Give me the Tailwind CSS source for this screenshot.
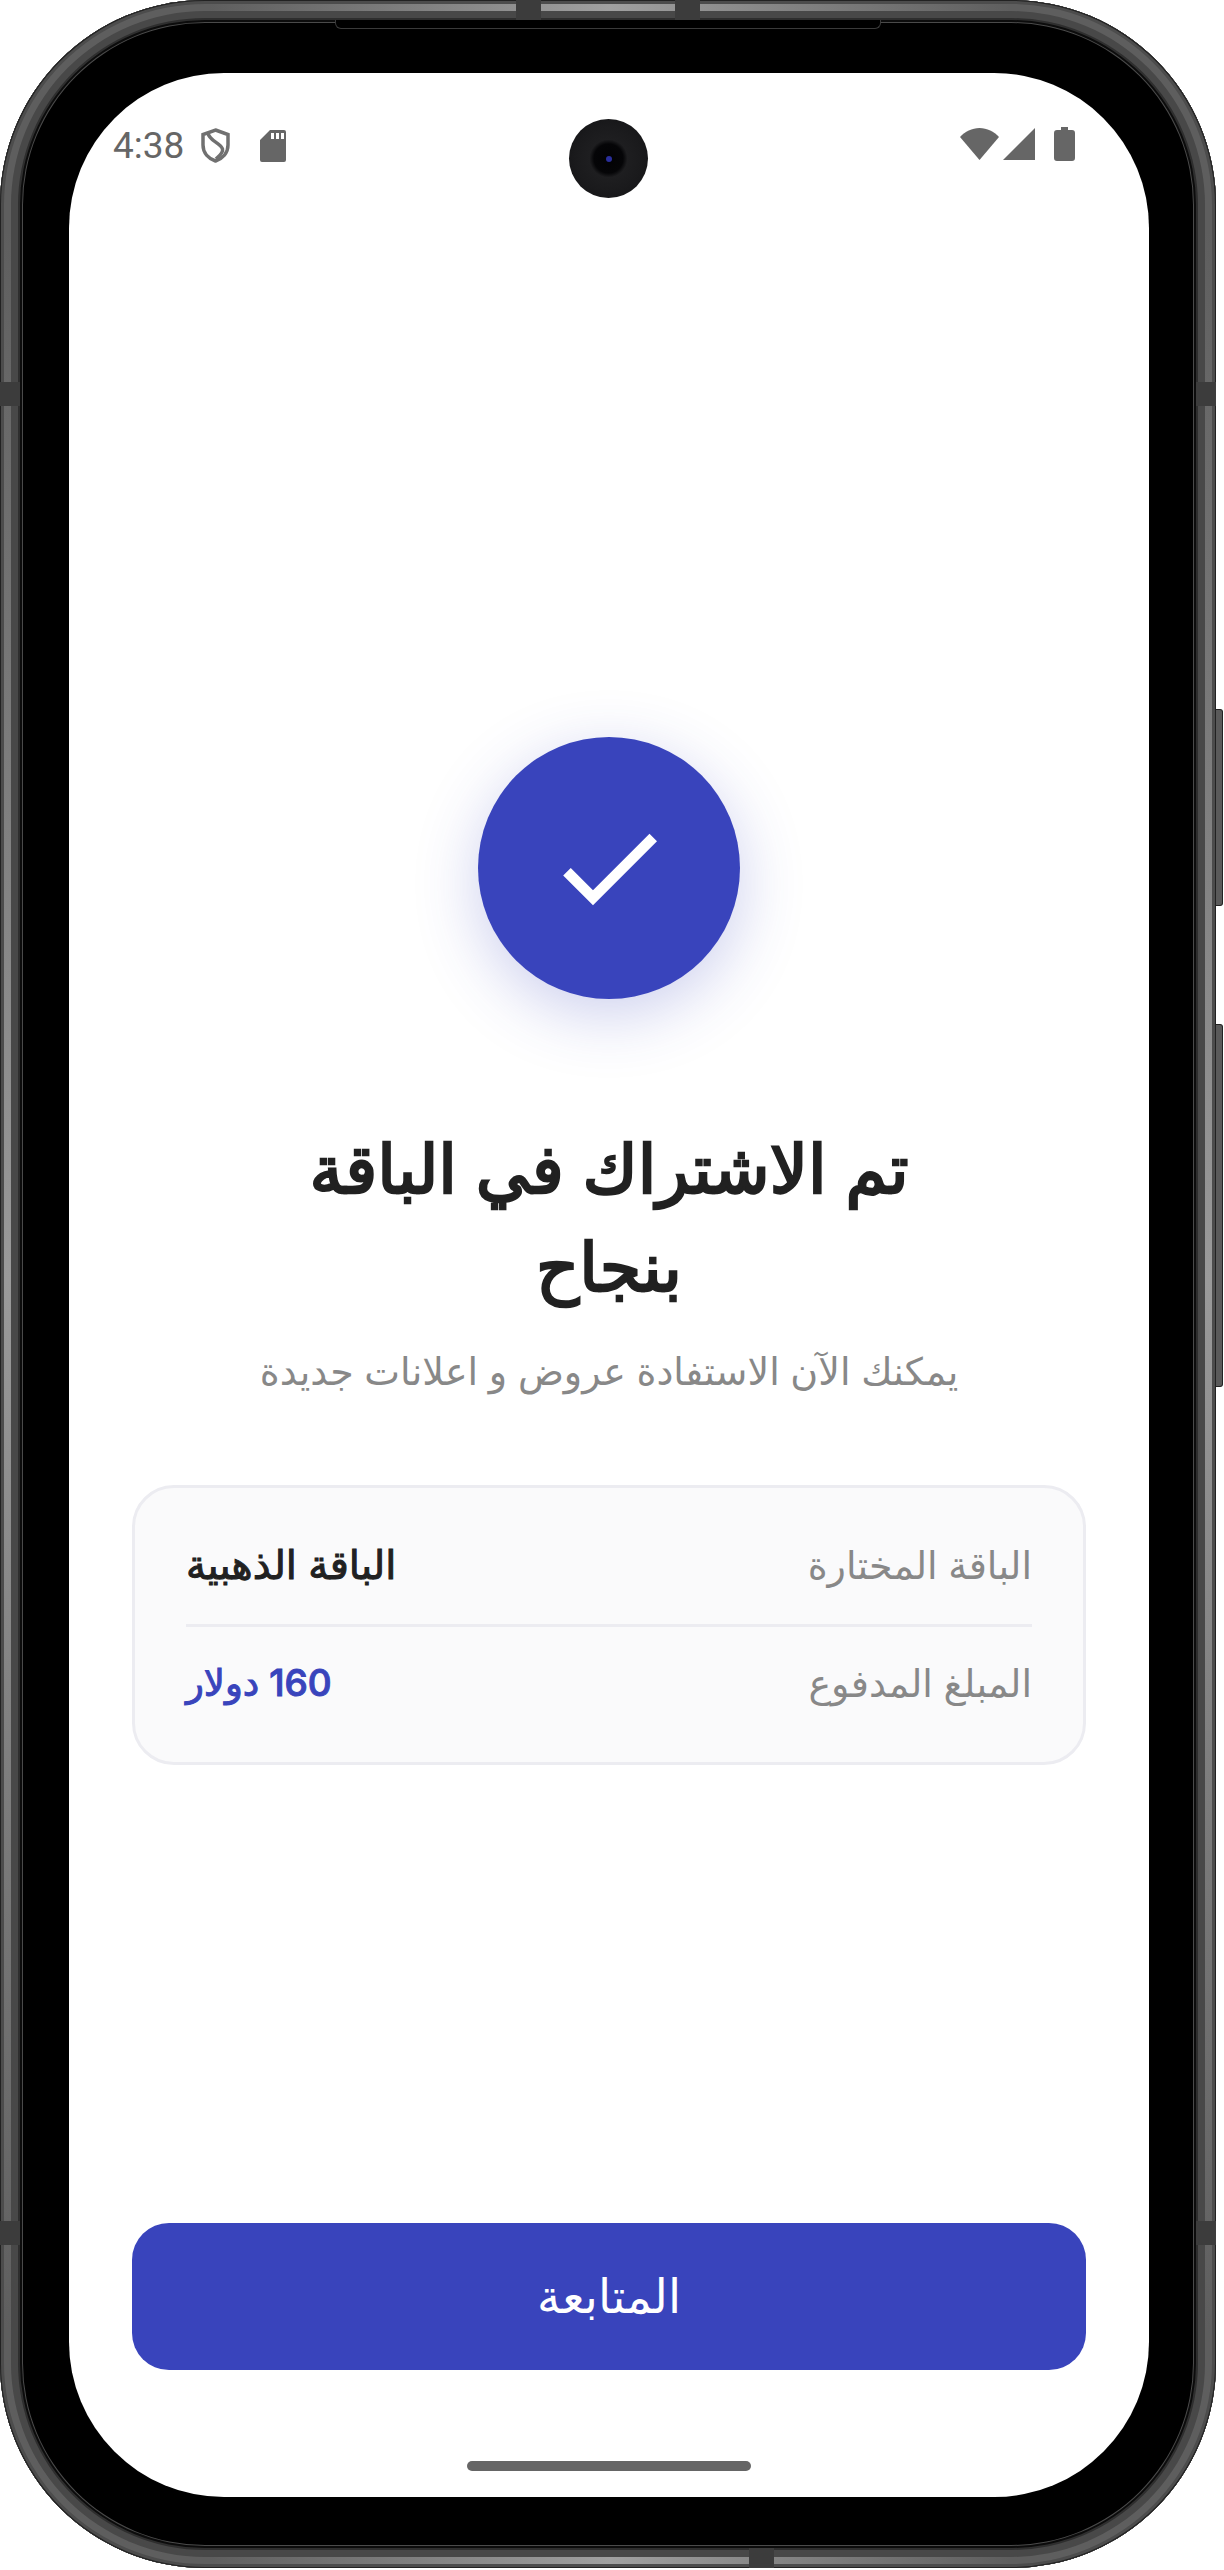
<!DOCTYPE html>
<html lang="ar">
<head>
  <meta charset="UTF-8" />
  <title>تم الاشتراك</title>
  <script src="https://cdn.jsdelivr.net/npm/@tailwindcss/browser@4"></script>
</head>
<body class="bg-white w-[1224px] h-[2570px] overflow-hidden font-['Inter','DejaVu_Sans',sans-serif]">
  <!-- Phone frame -->
  <div class="relative w-[1216px] h-[2568px] rounded-[205px] bg-black pt-[73px] pl-[69px] shadow-[inset_0_0_0_1px_#222,inset_0_0_0_4px_#4c4c4c,inset_0_0_0_11px_#5e5e5e,inset_0_0_0_18px_#484848,inset_0_0_0_20px_#2e2e2e,inset_0_0_0_22px_#0c0c0c,inset_0_0_0_23px_#4a4a4a]">

    <!-- Metal sheen on the straight edges -->
    <div class="absolute left-[4px] top-[230px] w-[7px] h-[2100px] bg-gradient-to-b from-transparent via-[#9a9a9a] to-transparent"></div>
    <div class="absolute left-[1205px] top-[230px] w-[7px] h-[2100px] bg-gradient-to-b from-transparent via-[#9a9a9a] to-transparent"></div>
    <div class="absolute left-[210px] top-[4px] w-[800px] h-[7px] bg-gradient-to-r from-transparent via-[#a0a0a0] to-transparent"></div>
    <div class="absolute left-[210px] top-[2557px] w-[800px] h-[7px] bg-gradient-to-r from-transparent via-[#a0a0a0] to-transparent"></div>

    <!-- Side buttons -->
    <div class="absolute left-[1216px] top-[709px] w-[7px] h-[197px] rounded-r-[3px] bg-[#5a5a5a] border border-l-0 border-[#222]"></div>
    <div class="absolute left-[1216px] top-[1024px] w-[7px] h-[363px] rounded-r-[3px] bg-[#5a5a5a] border border-l-0 border-[#222]"></div>

    <!-- Antenna bands -->
    <div class="absolute left-[516px] top-0 w-[25px] h-[20px] bg-[#3c3c3c]"></div>
    <div class="absolute left-[675px] top-0 w-[25px] h-[20px] bg-[#3c3c3c]"></div>
    <div class="absolute left-[749px] top-[2548px] w-[25px] h-[20px] bg-[#3c3c3c]"></div>
    <div class="absolute left-0 top-[382px] w-[20px] h-[24px] bg-[#3c3c3c]"></div>
    <div class="absolute left-[1196px] top-[382px] w-[20px] h-[24px] bg-[#3c3c3c]"></div>
    <div class="absolute left-0 top-[2221px] w-[20px] h-[24px] bg-[#3c3c3c]"></div>
    <div class="absolute left-[1196px] top-[2221px] w-[20px] h-[24px] bg-[#3c3c3c]"></div>

    <!-- Speaker notch -->
    <div class="absolute left-[335px] top-[20px] w-[546px] h-[9px] rounded-b-[6px] bg-black border-b border-x border-[#3a3a3a]"></div>

    <!-- Screen -->
    <div class="relative w-[1080px] h-[2424px] rounded-[155px] bg-white overflow-hidden flex flex-col">

      <!-- Status bar -->
      <div class="h-[140px] shrink-0 flex items-start justify-between pt-[54px] pl-[44px] pr-[74px]">
        <div class="flex items-center">
          <span class="font-['Roboto'] text-[37px] leading-[37px] text-[#666]">4:38</span>
          <svg class="ml-[17px] w-[29px] h-[35px]" viewBox="0 0 29 35" fill="none" stroke="#707070" stroke-width="3.5">
            <path d="M14.5 2 L27 6.500 V17 C27 25 21.500 30.500 14.500 33 C7.500 30.500 2 25 2 17 V6.500 Z" />
            <path d="M7 5 C8 13 20 15 21.500 21 C22.500 25 18 28 15 31" />
          </svg>
          <svg class="ml-[30px] w-[26px] h-[32px]" viewBox="0 0 26 32" fill="#666">
            <path d="M10 0 H24 a2 2 0 0 1 2 2 V30 a2 2 0 0 1 -2 2 H2 a2 2 0 0 1 -2 -2 V10 Z M11 3 V9 H14 V3 Z M16 3 V9 H19 V3 Z M21 3 V9 H24 V3 Z" fill-rule="evenodd" />
          </svg>
        </div>
        <div class="flex items-center">
          <svg class="w-[39px] h-[32px]" viewBox="0 0 39 32" fill="#666"><path d="M19.5 32 L0 9 C5 3.500 12 0 19.500 0 C27 0 34 3.500 39 9 Z" /></svg>
          <svg class="ml-[4px] w-[32px] h-[32px]" viewBox="0 0 32 32" fill="#666"><path d="M32 0 V32 H0 Z" /></svg>
          <svg class="ml-[19px] w-[21px] h-[34px]" viewBox="0 0 21 34" fill="#666"><path d="M7 0 H14 V3 H18 a3 3 0 0 1 3 3 V31 a3 3 0 0 1 -3 3 H3 a3 3 0 0 1 -3 -3 V6 a3 3 0 0 1 3 -3 H7 Z" /></svg>
        </div>
      </div>

      <!-- Camera -->
      <div class="absolute left-[500px] top-[46px] w-[79px] h-[79px] rounded-full flex items-center justify-center bg-[radial-gradient(circle,#020204_0%,#050507_26%,#1e1e20_34%,#1a1a1c_60%,#161618_78%,#000_82%,#000_100%)]">
        <div class="w-[6px] h-[6px] rounded-full bg-[#2a2f9c]"></div>
      </div>

      <!-- Content -->
      <div dir="rtl" class="flex-1 flex flex-col items-center px-[63px]">
        <div class="mt-[524px] w-[262px] h-[262px] shrink-0 rounded-full bg-[#3944BC] flex items-center justify-center shadow-[0_16px_63px_rgba(57,68,188,0.25)]">
          <svg class="w-[128px] h-[128px]" viewBox="0 0 24 24" fill="#fff"><path d="M9 16.170 4.830 12l-1.420 1.410L9 19 21 7l-1.410-1.410z" /></svg>
        </div>

        <h1 class="mt-[121px] w-[700px] text-center text-[67px] leading-[98px] font-normal text-[#212121] [-webkit-text-stroke:2.5px_#212121]">تم الاشتراك في الباقة بنجاح</h1>
        <p class="mt-[30px] text-center text-[38px] leading-[50px] text-[#888]">يمكنك الآن الاستفادة عروض و اعلانات جديدة</p>

        <div class="mt-[89px] w-[954px] h-[280px] shrink-0 rounded-[42px] border-[3px] border-[#ececf1] bg-[#fafafb] px-[51px] pt-[51px]">
          <div class="h-[52px] flex items-center justify-between text-[38px]">
            <span class="text-[#888]">الباقة المختارة</span>
            <span class="text-[40px] text-[#212121] [-webkit-text-stroke:1px_#212121]">الباقة الذهبية</span>
          </div>
          <div class="mt-[33px] h-[3px] bg-[#ececf1]"></div>
          <div class="mt-[30px] h-[52px] flex items-center justify-between text-[38px]">
            <span class="text-[#888]">المبلغ المدفوع</span>
            <span class="text-[37px] font-medium text-[#3944BC] [-webkit-text-stroke:1px_#3944BC]">160 دولار</span>
          </div>
        </div>

        <button class="mt-auto mb-[127px] w-[954px] h-[147px] shrink-0 rounded-[37px] bg-[#3944BC] text-white text-[47px]">المتابعة</button>
      </div>

      <!-- Home indicator -->
      <div class="absolute left-[398px] top-[2388px] w-[284px] h-[10px] rounded-full bg-[#666]"></div>
    </div>
  </div>
</body>
</html>
